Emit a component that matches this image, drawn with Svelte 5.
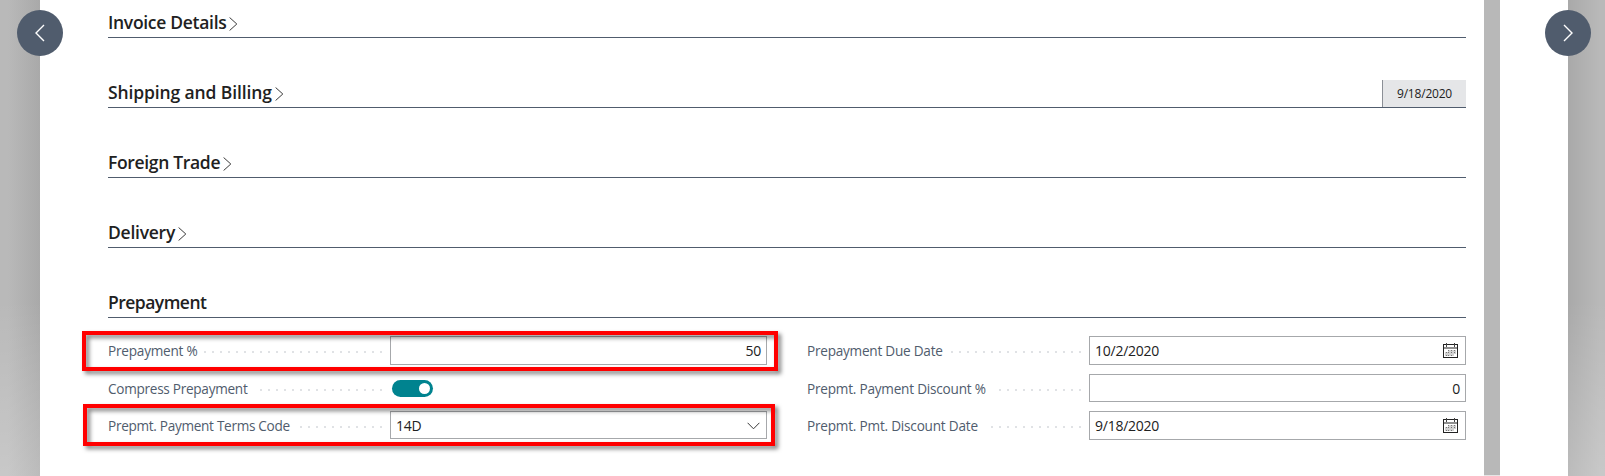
<script>
  const sections = [
    { title: 'Invoice Details', track: -0.3, open: false },
    { title: 'Shipping and Billing', track: -0.12, open: false, badge: '9/18/2020' },
    { title: 'Foreign Trade', track: -0.33, open: false },
    { title: 'Delivery', track: -0.25, open: false },
    { title: 'Prepayment', track: -0.52, open: true }
  ];

  // `dots` is the width of the dotted leader between a label and its field
  const columns = [
    [
      { label: 'Prepayment %', track: -0.22, dots: 178, kind: 'number', value: '50' },
      { label: 'Compress Prepayment', track: -0.28, dots: 122, kind: 'toggle' },
      { label: 'Prepmt. Payment Terms Code', track: -0.3, dots: 82, kind: 'select', value: '14D' }
    ],
    [
      { label: 'Prepayment Due Date', track: -0.24, dots: 130, kind: 'date', value: '10/2/2020' },
      { label: 'Prepmt. Payment Discount %', track: -0.22, dots: 82, kind: 'number', value: '0' },
      { label: 'Prepmt. Pmt. Discount Date', track: -0.21, dots: 90, kind: 'date', value: '9/18/2020' }
    ]
  ];
</script>

<div class="page">
  <div class="side left"></div>
  <main>
    <div class="content">
      {#each sections as s}
        <header>
          <h2 style="letter-spacing: {s.track}px">{s.title}</h2>
          {#if !s.open}
            <svg class="chev" width="9" height="14" viewBox="0 0 9 14"><path d="M.6 .5 7.8 7 .6 13.5" /></svg>
          {/if}
          {#if s.badge}<span class="badge">{s.badge}</span>{/if}
        </header>
      {/each}
      <div class="form">
        {#each columns as rows}
          <div class="col">
            {#each rows as r}
              <div class="row">
                <div class="caption">
                  <span class="label" style="letter-spacing: {r.track}px">{r.label}</span>
                  <i class="dots" style="width: {r.dots}px"></i>
                </div>
                {#if r.kind === 'toggle'}
                  <div class="toggle"><b></b></div>
                {:else}
                  <div class="field {r.kind}">
                    <span>{r.value}</span>
                    {#if r.kind === 'select'}
                      <svg width="13" height="8" viewBox="0 0 13 8"><path d="M.6 .8 6.5 6.8 12.4 .8" /></svg>
                    {:else if r.kind === 'date'}
                      <svg width="15" height="15" viewBox="0 0 15 15" shape-rendering="crispEdges">
                        <path class="frame" d="M.5 1.5h14v13H.5z" />
                        <path class="band" d="M1 4h13v2H1z" />
                        <path class="pin" d="M3 0h1v4H3zM11 0h1v4h-1z" />
                        <path class="faint" d="M5 7h8v4h-2v2H2V9h3z" />
                        <path class="cells" d="M5 7h1v1H5zM8 7h1v1H8zM11 7h1v1h-1zM3 9h1v1H3zM5 9h1v1H5zM8 9h1v1H8zM11 9h1v1h-1zM3 12h1v1H3zM5 12h1v1H5zM8 12h1v1H8z" />
                      </svg>
                    {/if}
                  </div>
                {/if}
              </div>
            {/each}
          </div>
        {/each}
      </div>
    </div>
    <div class="scroll"></div>
  </main>
  <div class="side right"></div>

  <div class="mark one"></div>
  <div class="mark two"></div>
  <button class="nav prev" aria-label="Previous">
    <svg width="10" height="18" viewBox="0 0 10 18"><path d="M9 1 1 9l8 8" /></svg>
  </button>
  <button class="nav next" aria-label="Next">
    <svg width="10" height="18" viewBox="0 0 10 18"><path d="M1 1l8 8-8 8" /></svg>
  </button>
</div>

<style>
  :global(body) { margin: 0; }
  .page {
    position: relative; display: flex; width: 1605px; height: 476px; overflow: hidden;
    background: #fff; font-family: "Open Sans", "Noto Sans", sans-serif; color: #212121;
  }
  .side { flex: none; }
  .left {
    width: 40px;
    background: linear-gradient(to bottom, transparent 300px, rgba(255,255,255,.22) 476px),
      linear-gradient(to right, #b9b9b9 8px, #a9a9a9 40px);
  }
  .right {
    width: 37px;
    background: linear-gradient(to bottom, transparent 300px, rgba(255,255,255,.22) 476px),
      linear-gradient(to left, #b9b9b9 5px, #a9a9a9 37px);
  }
  main { display: flex; width: 1528px; box-sizing: border-box; padding-left: 68px; gap: 18px; }
  .content { width: 1358px; }
  .scroll { width: 16px; height: 475px; background: #b8b8b8; border-bottom: 1px solid #e6e6e6; }

  header {
    display: flex; align-items: flex-end; box-sizing: border-box; height: 70px;
    border-bottom: 1px solid #505c6d;
  }
  header:first-child { height: 38px; }
  h2 { margin: 0 0 2px; font-size: 17.5px; font-weight: 600; line-height: 26px; white-space: nowrap; }
  .chev { margin: 0 0 6px 3px; }
  svg path { fill: none; stroke: #3a3a3a; stroke-width: 1; }
  .badge {
    box-sizing: border-box; width: 84px; height: 27px; margin-left: auto; padding-left: 14px;
    border-left: 1px solid #8b8f96; background: #e5e6e8;
    font-size: 12px; line-height: 27px; letter-spacing: -.2px;
  }

  .form { display: flex; gap: 40px; padding-top: 18px; }
  .col { display: grid; grid-template-rows: 29px 28px 29px; gap: 9px; width: 659px; }
  .col:first-child { grid-template-rows: 29px 28px 28px; }
  .row { display: flex; }
  .caption { display: flex; justify-content: space-between; width: 274px; margin-right: 8px; }
  .label { padding-top: 1px; font-size: 13.6px; line-height: 28px; color: #505c6d; white-space: nowrap; }
  .dots {
    height: 2px; margin-top: 15px;
    background: repeating-linear-gradient(to left, #e0e2e5 0 2px, transparent 2px 8px);
  }
  .field {
    display: flex; align-items: flex-start; justify-content: space-between; box-sizing: border-box;
    width: 377px; padding: 0 5px; border: 1px solid #a6a8ab;
    font-size: 14px; line-height: 28px; letter-spacing: -.25px;
  }
  .number { justify-content: flex-end; }
  .select svg { margin: 10px 1px 0 0; }
  .date svg { margin: 6px 2px 0 0; }
  .date .frame { stroke: #222; }
  .date .band { fill: #8f8f8f; stroke: none; }
  .date .pin { fill: #444; stroke: none; }
  .date .cells { fill: #777; stroke: none; }
  .date .faint { fill: #d2d2d2; stroke: none; }
  .toggle {
    display: flex; align-items: center; justify-content: flex-end; box-sizing: border-box;
    width: 41px; height: 17px; margin: 5.5px 0 0 1.5px; padding-right: 3px;
    border-radius: 9px; background: #00838f;
  }
  .toggle b { width: 11px; height: 11px; border-radius: 50%; background: #fff; }

  .mark {
    position: absolute; box-sizing: border-box; border: 4px solid #f00;
    filter: drop-shadow(3px 3px 2px rgba(0,0,0,.5));
  }
  .one { left: 82px; top: 331px; width: 696px; height: 40px; }
  .two { left: 83px; top: 404px; width: 692px; height: 42px; }

  .nav {
    position: absolute; top: 10px; display: grid; place-items: center; width: 46px; height: 46px;
    padding: 0; border: 0; border-radius: 50%; background: #505c6d;
  }
  .nav path { stroke: #fff; stroke-width: 1.4; }
  .prev { left: 17px; }
  .next { left: 1545px; }
</style>
